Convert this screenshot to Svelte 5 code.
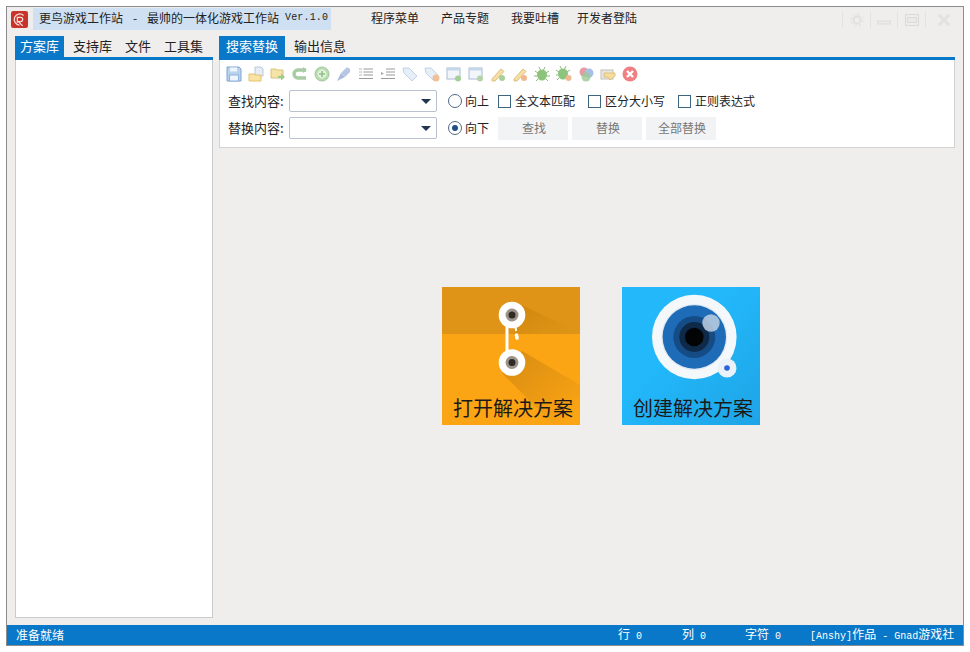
<script>
  const menus = ['程序菜单', '产品专题', '我要吐槽', '开发者登陆'];
  const sideTabs = ['方案库', '支持库', '文件', '工具集'];
  const checks = ['全文本匹配', '区分大小写', '正则表达式'];
  const actions = ['查找', '替换', '全部替换'];
</script>

<div class="window">
  <header class="titlebar">
    <svg class="logo" viewBox="0 0 16 16" width="17" height="17">
      <rect width="16" height="16" rx="2" fill="#c8332c" />
      <path d="M11.8 4.2A5.2 5.2 0 1 0 8 13.2M6 11V6h3a2 2 0 0 1 0 4H7l4 4" fill="none" stroke="#f6dcd8" stroke-width="1.2" />
    </svg>
    <div class="title">更鸟游戏工作站<span class="gap">-</span>最帅的一体化游戏工作站<span class="ver">Ver.1.0</span></div>
    <nav class="menu">
      {#each menus as m}<span>{m}</span>{/each}
    </nav>
    <div class="controls">
      <span class="ctl"><svg viewBox="0 0 16 16" width="16" height="16"><circle cx="8" cy="8" r="3.6" fill="none" stroke="#e2e0e0" stroke-width="2.2" /><circle cx="8" cy="8" r="6" fill="none" stroke="#e6e4e4" stroke-width="1.6" stroke-dasharray="2.4 2.3" /></svg></span>
      <span class="ctl"><svg viewBox="0 0 16 16" width="16" height="16"><rect x="1.5" y="9" width="13" height="3" fill="#ebe9e9" stroke="#dddbdb" /></svg></span>
      <span class="ctl"><svg viewBox="0 0 16 16" width="16" height="16"><rect x="1.5" y="2.5" width="13" height="11" fill="none" stroke="#dbd9d9" /><rect x="3.500" y="5.500" width="9" height="5" fill="#ebe9e9" stroke="#dbd9d9" /></svg></span>
      <span class="ctl last"><svg viewBox="0 0 16 16" width="14" height="14"><path d="M2 2l12 12M14 2L2 14" stroke="#e2e0e0" stroke-width="3.400" fill="none" /></svg></span>
    </div>
  </header>

  <div class="body">
    <aside class="side">
      <div class="tabs">
        {#each sideTabs as t, i}<span class="tab" class:active={i === 0}>{t}</span>{/each}
      </div>
      <div class="sidebox"></div>
    </aside>

    <main class="main">
      <div class="tabs">
        <span class="tab active wide">搜索替换</span><span class="tab wide">输出信息</span>
      </div>
      <section class="panel">
        <div class="toolbar">
          <svg viewBox="0 0 16 16" width="16" height="16"><path d="M1 1h12l2 2v12H1z" fill="#b9d2ee" stroke="#7fa6d2" /><rect x="4" y="1.5" width="7" height="4" fill="#eef4fb" /><rect x="3.5" y="9" width="9" height="6" fill="#eef4fb" stroke="#90b2d8" /></svg>
          <svg viewBox="0 0 16 16" width="16" height="16"><path d="M7 1h6l2 2v7H7z" fill="#e8edf5" stroke="#b8c8dc" /><path d="M1 8h5l1 1h6v6H1z" fill="#fbe3a4" stroke="#e2c272" /></svg>
          <svg viewBox="0 0 16 16" width="16" height="16"><path d="M1 3h5l1 1h6v8H1z" fill="#f5e4a8" stroke="#d8c07a" /><path d="M8 10h3V7.500l4 3.500-4 3.500V12H8z" fill="#9ecb86" /></svg>
          <svg viewBox="0 0 16 16" width="16" height="16"><path d="M14 4H6a4 4 0 0 0 0 8h8" fill="none" stroke="#a8cda4" stroke-width="3.400" /><path d="M11 1l4 3-4 3z" fill="#a8cda4" /></svg>
          <svg viewBox="0 0 16 16" width="16" height="16"><circle cx="8" cy="8" r="7" fill="#b9dcb0" stroke="#a0c898" /><circle cx="8" cy="8" r="4.400" fill="#e4f2df" /><path d="M8 5v6M5 8h6" stroke="#90c088" stroke-width="1.600" /></svg>
          <svg viewBox="0 0 16 16" width="16" height="16"><path d="M1 15l4-8 4 4z" fill="#a8bcdc" /><path d="M5 7l5-5c2-1.500 5 1 4 4l-5 5z" fill="#b8c8e4" /></svg>
          <svg viewBox="0 0 16 16" width="16" height="16"><path d="M5.500 3H15M5.500 6H15M5.500 9H15M1 12.500H15" stroke="#9a9a9a" /><path d="M1 3h3M1 6h3M1 9h3" stroke="#b4b4b4" /></svg>
          <svg viewBox="0 0 16 16" width="16" height="16"><path d="M6 3h9M6 6h9M6 9h9M1 12.500h14" stroke="#9a9a9a" /><path d="M1 6l3 1.500L1 9z" fill="#a8a8a8" /></svg>
          <svg viewBox="0 0 16 16" width="16" height="16"><path d="M1 2h6l8 8-5 5-8-8z" fill="#e6eef8" stroke="#c0d2e8" /></svg>
          <svg viewBox="0 0 16 16" width="16" height="16"><path d="M1 2h6l7 7-5 5-7-7z" fill="#e6eef8" stroke="#c0d2e8" /><circle cx="12" cy="12" r="3.500" fill="#f0c098" /></svg>
          <svg viewBox="0 0 16 16" width="16" height="16"><rect x="1" y="2" width="13" height="11" fill="#f2f6fb" stroke="#a8bcd0" /><rect x="1" y="2" width="13" height="2.500" fill="#c4d6ea" /><circle cx="12" cy="12.500" r="3" fill="#a4d098" /></svg>
          <svg viewBox="0 0 16 16" width="16" height="16"><rect x="1" y="2" width="13" height="11" fill="#f2f6fb" stroke="#a8bcd0" /><rect x="1" y="2" width="13" height="2.500" fill="#c4d6ea" /><circle cx="12" cy="12.500" r="3" fill="#b4d4a8" /></svg>
          <svg viewBox="0 0 16 16" width="16" height="16"><path d="M2 13L11 3l3 2.500L5 15H2z" fill="#f6dfa4" stroke="#dcc080" /><circle cx="12" cy="12" r="3" fill="#a8d098" /></svg>
          <svg viewBox="0 0 16 16" width="16" height="16"><path d="M2 13L11 3l3 2.500L5 15H2z" fill="#f6dfa4" stroke="#dcc080" /><circle cx="12" cy="12" r="3" fill="#f0b890" /></svg>
          <svg viewBox="0 0 16 16" width="16" height="16"><ellipse cx="8" cy="9" rx="5" ry="5.500" fill="#8cc47c" /><path d="M1 5l3 2M15 5l-3 2M0 10h3M16 10h-3M2 15l2-2M14 15l-2-2M5 1l1.500 3M11 1L9.500 4" stroke="#8cb87c" /></svg>
          <svg viewBox="0 0 16 16" width="16" height="16"><ellipse cx="7" cy="8" rx="5" ry="5.500" fill="#8cc47c" /><path d="M0 4l3 2M14 4l-3 2M4 0l1.500 3M10 0L8.500 3M0 9h2M1 14l2-2" stroke="#8cb87c" /><circle cx="12.500" cy="12" r="3" fill="#f0b890" /></svg>
          <svg viewBox="0 0 16 16" width="16" height="16"><circle cx="6" cy="6" r="4.500" fill="#e89aa0" /><circle cx="11" cy="7" r="4.500" fill="#a8c0e4" /><circle cx="8" cy="11" r="4.500" fill="#9cc894" opacity=".8" /></svg>
          <svg viewBox="0 0 16 16" width="16" height="16"><rect x="1" y="4" width="12" height="9" fill="#e8e6e2" stroke="#c4c0b8" /><path d="M4 7h11v3l-5 4-2-3H4z" fill="#f6dd9c" stroke="#dcc080" /></svg>
          <svg viewBox="0 0 16 16" width="16" height="16"><circle cx="8" cy="8" r="7.500" fill="#ee7f82" /><path d="M5 5l6 6M11 5l-6 6" stroke="#fff" stroke-width="2.400" /></svg>
        </div>

        <div class="row">
          <label class="lbl" for="find">查找内容:</label>
          <div class="combo" id="find"><i></i></div>
          <span class="radio"></span><span class="opt">向上</span>
          {#each checks as c}<span class="check"></span><span class="opt chk">{c}</span>{/each}
        </div>
        <div class="row second">
          <label class="lbl" for="rep">替换内容:</label>
          <div class="combo" id="rep"><i></i></div>
          <span class="radio on"></span><span class="opt">向下</span>
          {#each actions as a}<button>{a}</button>{/each}
        </div>
      </section>

      <div class="tiles">
        <div class="tile">
          <svg viewBox="0 0 138 138" width="138" height="138">
            <defs>
              <linearGradient id="sh1" x1="0.3" y1="0" x2="1" y2="0.7">
                <stop offset="0" stop-color="#d3890f" />
                <stop offset="1" stop-color="#dd9416" />
              </linearGradient>
              <linearGradient id="sh2" x1="0.2" y1="0.1" x2="0.9" y2="0.9">
                <stop offset="0" stop-color="#dc8f12" />
                <stop offset="1" stop-color="#fba414" />
              </linearGradient>
            </defs>
            <rect width="138" height="138" fill="#fba414" />
            <rect width="138" height="47" fill="#df9418" />
            <path d="M80 18L138 46V47H72V40z" fill="url(#sh1)" />
            <path d="M80 64L138 98V138H112L60 86z" fill="url(#sh2)" />
            <path d="M65 38v30" stroke="#fff" stroke-width="3" />
            <path d="M73.500 40l.6 4" stroke="#fff" stroke-width="2" />
            <path d="M74.500 48l.5 3" stroke="#fff" stroke-width="3.600" stroke-linecap="round" />
            <circle cx="70" cy="28" r="13.300" fill="#fff" />
            <circle cx="70" cy="28" r="6.500" fill="#9c948a" />
            <circle cx="70" cy="28" r="3.500" fill="#2f2a24" />
            <circle cx="70" cy="75.500" r="13.300" fill="#fff" />
            <circle cx="70" cy="75.500" r="6.500" fill="#9c948a" />
            <circle cx="70" cy="75.500" r="3.500" fill="#2f2a24" />
          </svg>
          <span class="cap">打开解决方案</span>
        </div>
        <div class="tile">
          <svg viewBox="0 0 138 138" width="138" height="138">
            <defs>
              <linearGradient id="bg2" x1="0" y1="0" x2="1" y2="1">
                <stop offset="0.4" stop-color="#22b8fa" />
                <stop offset="1" stop-color="#1ea4e6" />
              </linearGradient>
            </defs>
            <rect width="138" height="138" fill="url(#bg2)" />
            <circle cx="72.300" cy="50" r="42.300" fill="#f4f8fb" />
            <circle cx="105" cy="81" r="9.500" fill="#eaf1f8" />
            <circle cx="105" cy="81" r="2.800" fill="#2a62d8" />
            <circle cx="72.300" cy="50" r="33" fill="#dfe9f3" />
            <circle cx="72.300" cy="50" r="31.700" fill="#1e6cb8" />
            <circle cx="72.300" cy="50" r="21" fill="#164c86" />
            <circle cx="72.300" cy="50" r="15" fill="#0e2a48" />
            <circle cx="72.300" cy="50" r="9.300" fill="#020406" />
            <circle cx="89" cy="36" r="8.700" fill="#c4d4e4" opacity=".82" />
          </svg>
          <span class="cap">创建解决方案</span>
        </div>
      </div>
    </main>
  </div>

  <footer class="status">
    <span class="ready">准备就绪</span>
    <span class="s1">行<span class="m">{' 0'}</span></span>
    <span class="s2">列<span class="m">{' 0'}</span></span>
    <span class="s3">字符<span class="m">{' 0'}</span></span>
    <span class="s4"><span class="m">[Anshy]</span>作品<span class="m">{' - Gnad'}</span>游戏社</span>
  </footer>
</div>

<style>
  :global(body) {
    margin: 0;
    background: #fff;
    font-family: "Noto Sans CJK SC", "Liberation Sans", sans-serif;
    font-size: 12px;
    color: #222;
  }
  .window {
    box-sizing: border-box;
    width: 958px;
    height: 640px;
    margin: 6px 0 0 6px;
    border: 1px solid #8c8c8c;
    background: #f0eded;
    display: flex;
    flex-direction: column;
  }
  .titlebar {
    height: 23px;
    flex: none;
    display: flex;
    align-items: center;
    padding-left: 4px;
  }
  .logo { flex: none; margin-top: 1px; }
  .title {
    margin-left: 5px;
    width: 298px;
    height: 22px;
    line-height: 20px;
    padding-left: 6px;
    box-sizing: border-box;
    background: #cfe0f3;
    white-space: nowrap;
    color: #222;
    display: flex;
  }
  .gap { width: 24px; text-align: center; }
  .ver {
    font-family: "Liberation Mono", monospace;
    font-size: 10px;
    margin-left: 6px;
    letter-spacing: 0.15px;
  }
  .menu {
    display: flex;
    gap: 22px;
    margin-left: 40px;
    line-height: 20px;
    margin-bottom: 1px;
  }
  .menu span:last-child { margin-left: -4px; }
  .controls {
    margin-left: auto;
    display: flex;
    height: 17px;
    margin-right: 1px;
    margin-top: 2px;
  }
  .ctl {
    width: 27.600px;
    display: flex;
    align-items: center;
    justify-content: center;
    border-left: 1px solid #e4e2e2;
    box-sizing: border-box;
  }
  .ctl.last { width: 37px; }
  .body {
    flex: 1;
    min-height: 0;
    display: flex;
    padding: 6px 0 0 8px;
  }
  .side {
    width: 198px;
    display: flex;
    flex-direction: column;
    flex: none;
  }
  .tabs {
    display: flex;
    flex: none;
    border-bottom: 3px solid #0a78c8;
    box-sizing: content-box;
    height: 21px;
  }
  .tab {
    padding: 0 5px;
    margin-right: 3px;
    font-size: 13px;
    line-height: 19px;
    color: #222;
  }
  .side .tab:nth-child(1) { margin-right: 4px; }
  .tab.active {
    background: #0a78c8;
    color: #fff;
  }
  .tab.wide { width: 66px; padding: 0; text-align: center; margin: 0; }
  .tab.wide + .tab.wide { margin-left: 2px; }
  .sidebox {
    flex: none;
    height: 558px;
    background: #fff;
    border: 1px solid #c9cccf;
    border-top: 0;
    box-sizing: border-box;
  }
  .main {
    margin-left: 6px;
    width: 736px;
    flex: none;
    display: flex;
    flex-direction: column;
  }
  .panel {
    background: #fff;
    border: 1px solid #d0d2d4;
    border-top: 0;
    height: 88px;
    box-sizing: border-box;
    padding: 5px 0 0 6px;
    flex: none;
  }
  .toolbar {
    display: flex;
    gap: 6px;
    height: 18px;
    align-items: center;
  }
  .toolbar svg { flex: none; }
  .row {
    display: flex;
    align-items: center;
    height: 22px;
    margin-top: 7px;
    padding-left: 2px;
  }
  .row.second { margin-top: 5px; }
  .lbl {
    width: 61px;
    font-size: 13px;
    white-space: nowrap;
    flex: none;
    padding-bottom: 2px;
  }
  .combo {
    box-sizing: border-box;
    width: 148px;
    height: 22px;
    border: 1px solid #b8c2ce;
    border-radius: 2px;
    position: relative;
    flex: none;
  }
  .combo i {
    position: absolute;
    right: 5px;
    top: 8px;
    border-left: 5px solid transparent;
    border-right: 5px solid transparent;
    border-top: 5px solid #1f3550;
  }
  .radio {
    box-sizing: border-box;
    width: 14px;
    height: 14px;
    border: 1px solid #506a86;
    border-radius: 50%;
    margin: 0 3px 0 11px;
    flex: none;
    position: relative;
  }
  .radio.on::after {
    content: "";
    position: absolute;
    left: 3px;
    top: 3px;
    width: 6px;
    height: 6px;
    border-radius: 50%;
    background: #1d4f86;
  }
  .opt { font-size: 12px; white-space: nowrap; padding-bottom: 2px; }
  .check {
    box-sizing: border-box;
    width: 13px;
    height: 13px;
    border: 1px solid #3e6480;
    margin: 0 4px 0 9px;
    flex: none;
  }
  .opt.chk { margin-right: 4px; }
  button {
    width: 70px;
    height: 23px;
    border: 0;
    margin: 0 4px 0 0;
    padding: 0 0 2px 2px;
    background: #f1f3f5;
    color: #777;
    font: 12px "Noto Sans CJK SC", sans-serif;
    flex: none;
  }
  .opt + button { margin-left: 9px; }
  .tiles {
    display: flex;
    gap: 42px;
    margin: 139px 0 0 223px;
  }
  .tile {
    position: relative;
    width: 138px;
    height: 138px;
  }
  .tile svg { display: block; }
  .cap {
    position: absolute;
    left: 11px;
    bottom: 3px;
    font-size: 20px;
    line-height: 28px;
    color: #1c1a18;
    white-space: nowrap;
  }
  .status {
    height: 20px;
    flex: none;
    background: #0a78c8;
    color: #fff;
    display: flex;
    align-items: center;
    line-height: 20px;
  }
  .m {
    font-family: "Liberation Mono", monospace;
    font-size: 10px;
    white-space: pre;
  }
  .ready { margin-left: 9px; }
  .s1 { margin-left: 554px; }
  .s2 { margin-left: 40px; }
  .s3 { margin-left: 39px; }
  .s4 { margin-left: 29px; }
</style>
